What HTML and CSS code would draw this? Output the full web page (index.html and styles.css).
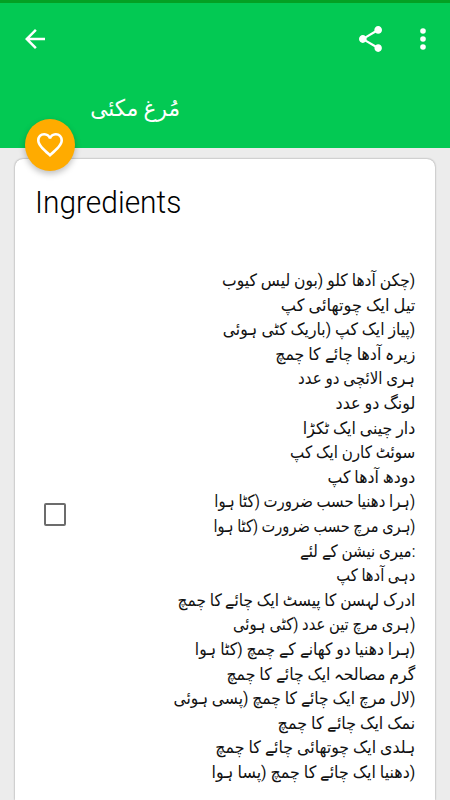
FILE: index.html
```html
<!DOCTYPE html>
<html lang="en">
<head>
  <meta charset="UTF-8">
  <meta name="viewport" content="width=device-width, initial-scale=1.0">
  <title>مُرغ مکئی</title>
  <link rel="stylesheet" href="styles.css">
</head>
<body>
  <header class="app-bar">
    <div class="toolbar">
      <button class="icon-btn back" aria-label="Back">
        <svg viewBox="4 4 16 16" width="20" height="20"><path d="M20 11H7.83l5.59-5.59L12 4l-8 8 8 8 1.41-1.41L7.83 13H20v-2z"/></svg>
      </button>
      <button class="icon-btn share" aria-label="Share">
        <svg viewBox="3 2 18 20" width="23" height="26" preserveAspectRatio="none"><path d="M18 16.08c-.76 0-1.44.3-1.96.77L8.91 12.7c.05-.23.09-.46.09-.7s-.04-.47-.09-.7l7.05-4.11c.54.5 1.25.81 2.04.81 1.66 0 3-1.34 3-3s-1.34-3-3-3-3 1.34-3 3c0 .24.04.47.09.7L8.04 9.81C7.5 9.31 6.79 9 6 9c-1.66 0-3 1.34-3 3s1.34 3 3 3c.79 0 1.5-.31 2.04-.81l7.12 4.16c-.05.21-.08.43-.08.65 0 1.61 1.31 2.92 2.92 2.92s2.92-1.31 2.92-2.92-1.31-2.92-2.92-2.92z"/></svg>
      </button>
      <button class="icon-btn more" aria-label="More">
        <svg viewBox="0 0 6 22" width="6" height="22"><circle cx="3" cy="3" r="2.8"/><circle cx="3" cy="11" r="2.8"/><circle cx="3" cy="19" r="2.8"/></svg>
      </button>
    </div>
    <h1 class="title" dir="rtl">مُرغ مکئی</h1>
    <button class="fab" aria-label="Favourite">
      <svg viewBox="2 3 20 18.35" width="26" height="24" preserveAspectRatio="none"><path d="M16.5 3c-1.74 0-3.41.81-4.5 2.09C10.91 3.81 9.24 3 7.5 3 4.42 3 2 5.42 2 8.5c0 3.78 3.4 6.86 8.55 11.54L12 21.35l1.45-1.32C18.6 15.36 22 12.28 22 8.5 22 5.42 19.58 3 16.5 3zm-4.4 15.55l-.1.1-.1-.1C7.14 14.24 4 11.39 4 8.5 4 6.5 5.5 5 7.5 5c1.54 0 3.04.99 3.57 2.36h1.87C13.46 5.99 14.96 5 16.5 5c2 0 3.5 1.5 3.5 3.5 0 2.89-3.14 5.74-7.9 10.05z"/></svg>
    </button>
  </header>

  <main class="card">
    <h2>Ingredients</h2>
    <div class="row">
      <span class="checkbox" role="checkbox" aria-checked="false"></span>
      <ul class="ingredients">
        <li style="--fit: .917">چکن آدھا کلو (بون لیس کیوب<bdi>)</bdi></li>
        <li style="--fit: .955">تیل ایک چوتھائی کپ</li>
        <li style="--fit: .922">پیاز ایک کپ (باریک کٹی ہوئی<bdi>)</bdi></li>
        <li style="--fit: .93">زیرہ آدھا چائے کا چمچ</li>
        <li style="--fit: .888">ہری الائچی دو عدد</li>
        <li style="--fit: .941">لونگ دو عدد</li>
        <li style="--fit: .93">دار چینی ایک ٹکڑا</li>
        <li style="--fit: .891">سوئٹ کارن ایک کپ</li>
        <li style="--fit: .925">دودھ آدھا کپ</li>
        <li style="--fit: .876">ہرا دھنیا حسب ضرورت (کٹا ہوا<bdi>)</bdi></li>
        <li style="--fit: .857">ہری مرچ حسب ضرورت (کٹا ہوا<bdi>)</bdi></li>
        <li style="--fit: .887">میری نیشن کے لئے<bdi>:</bdi></li>
        <li style="--fit: .864">دہی آدھا کپ</li>
        <li style="--fit: .903">ادرک لہسن کا پیسٹ ایک چائے کا چمچ</li>
        <li style="--fit: .87">ہری مرچ تین عدد (کٹی ہوئی<bdi>)</bdi></li>
        <li style="--fit: .917">ہرا دھنیا دو کھانے کے چمچ (کٹا ہوا<bdi>)</bdi></li>
        <li style="--fit: .926">گرم مصالحہ ایک چائے کا چمچ</li>
        <li style="--fit: .915">لال مرچ ایک چائے کا چمچ (پسی ہوئی<bdi>)</bdi></li>
        <li style="--fit: .941">نمک ایک چائے کا چمچ</li>
        <li style="--fit: .932">ہلدی ایک چوتھائی چائے کا چمچ</li>
        <li style="--fit: .937">دھنیا ایک چائے کا چمچ (پسا ہوا<bdi>)</bdi></li>
      </ul>
    </div>
  </main>
</body>
</html>
```
FILE: styles.css
```css
:root {
  --primary: #03c953;
  --primary-dark: #04a024;
  --accent: #ffab00;
  --bg-color: #ececec;
}
* {
  box-sizing: border-box;
  margin: 0;
  padding: 0;
}
body {
  height: 800px;
  overflow: hidden;
  display: flex;
  flex-direction: column;
  background: var(--bg-color);
  font-family: Roboto, "DejaVu Sans", sans-serif;
}
button {
  border: none;
  background: none;
}
svg {
  display: block;
  fill: white;
}
.app-bar {
  position: relative;
  flex: none;
  height: 148px;
  background: var(--primary);
  border-top: 3px solid var(--primary-dark);
}
.toolbar {
  display: flex;
  align-items: center;
  height: 72px;
  padding: 0 24px 0 25px;
}
.share {
  margin-left: auto;
  margin-right: 38px;
}
.title {
  width: 90px;
  margin: 16px 0 0 90px;
  color: white;
  font-size: 23px;
  font-weight: 400;
  line-height: 36px;
  white-space: nowrap;
  transform: scaleX(0.94);
  transform-origin: right;
}
.fab {
  position: absolute;
  left: 25px;
  top: 116px;
  width: 50px;
  height: 52px;
  display: flex;
  align-items: center;
  justify-content: center;
  border-radius: 50%;
  background: var(--accent);
  box-shadow: 0 3px 6px rgba(0,0,0,0.25);
}
.card {
  flex: 1;
  margin: 11px 15px 0;
  padding: 22px 20px 0;
  background: white;
  border-radius: 8px 8px 0 0;
  box-shadow: 0 0 2px rgba(0,0,0,0.45);
}
h2 {
  color: #000;
  font-size: 31px;
  font-weight: 300;
  line-height: 44px;
  transform: scaleX(0.965);
  transform-origin: left;
}
.row {
  display: flex;
  align-items: center;
  justify-content: space-between;
  margin-top: 43px;
}
.checkbox {
  width: 22px;
  height: 23px;
  margin: -23px 0 0 9px;
  border: 2px solid #6c6c6c;
  border-radius: 2px;
}
.ingredients {
  list-style: none;
  color: #111;
  font-size: 17px;
  text-align: right;
  white-space: nowrap;
}
.ingredients li {
  height: 24.6px;
  line-height: 24.6px;
  transform: scaleX(var(--fit));
  transform-origin: right;
}
```
